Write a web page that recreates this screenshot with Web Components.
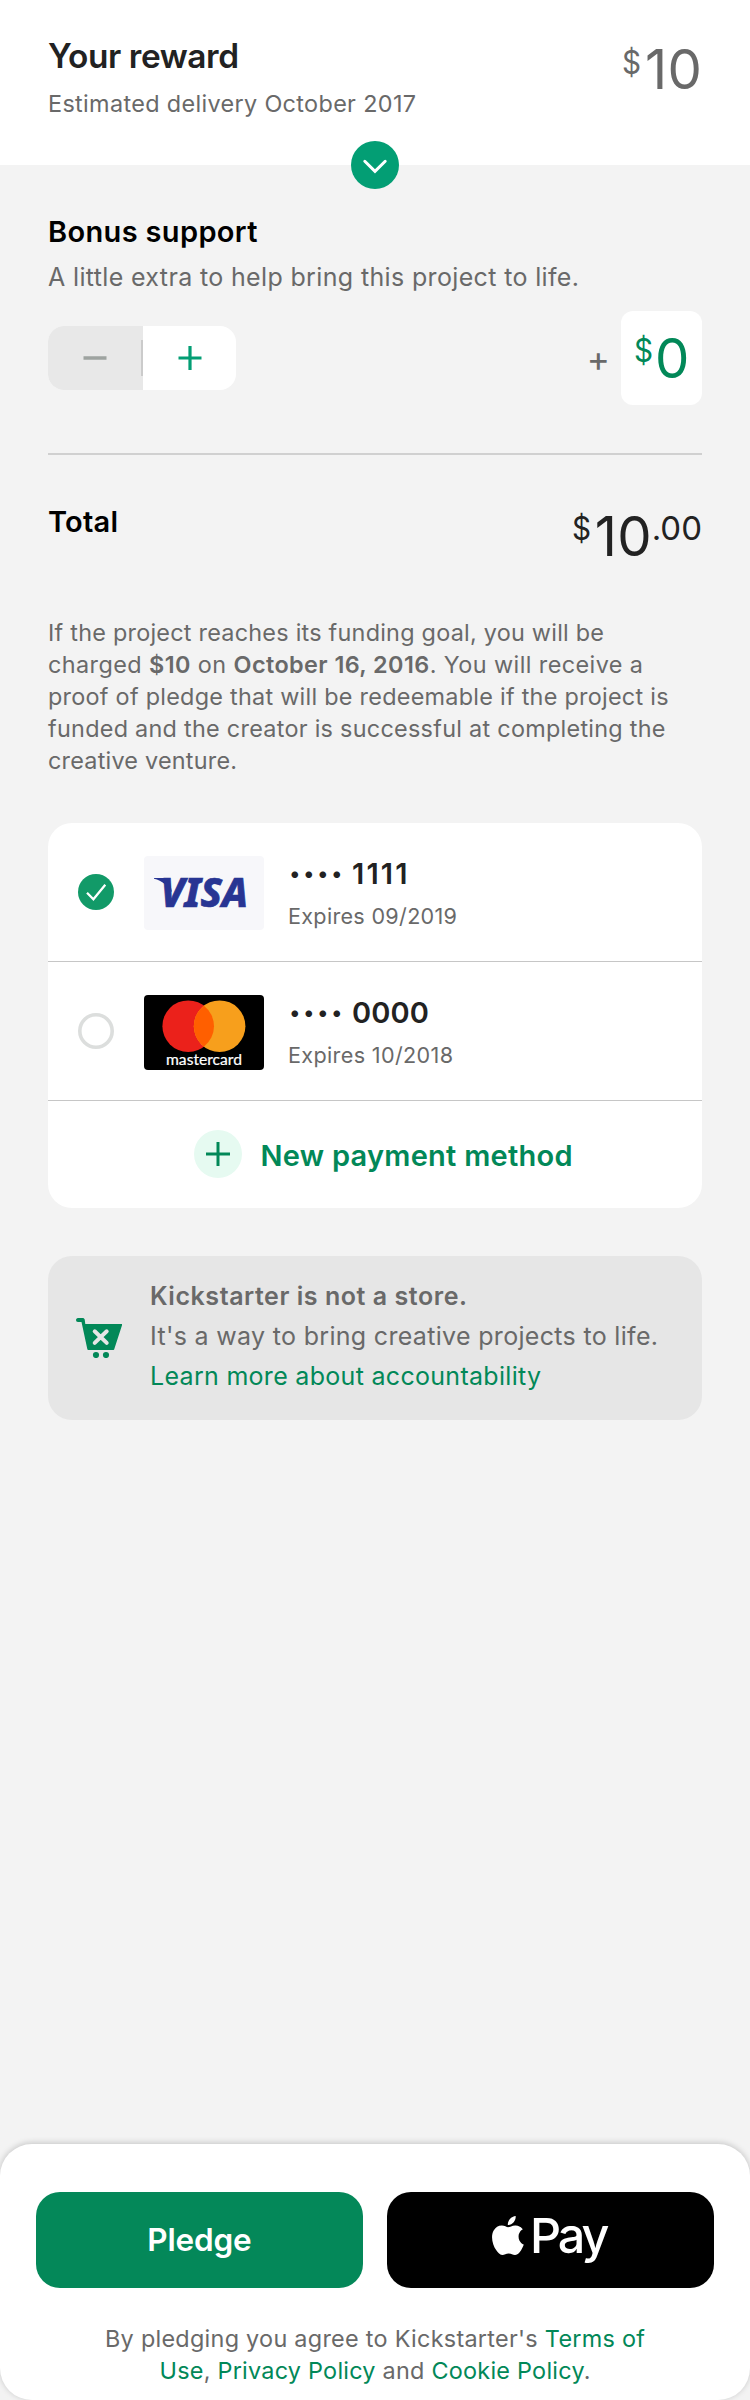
<!DOCTYPE html>
<html lang="en">
<head>
<meta charset="utf-8">
<title>Pledge</title>
<style>
html,body{margin:0;padding:0}
body{background:#f3f3f3;font-family:Inter,"Liberation Sans",sans-serif;color:#696969}
a{color:#028858;text-decoration:none}
</style>
</head>
<body>
<pledge-page></pledge-page>

<template id="t-page">
<style>
:host{display:flex;flex-direction:column;width:750px;height:2400px;background:#f3f3f3;overflow:hidden}
main{padding:46.5px 48px 0}
.support{display:flex;align-items:center;justify-content:space-between;height:94px;margin:18.4px 0 48px}
.extra{display:flex;align-items:center;gap:11px}
.plus{font-size:35px;line-height:40px;margin-top:1px}
.box{box-sizing:border-box;width:81px;height:94px;border-radius:12px;background:#fff;padding:14.7px 14px 0 13px;color:#028858}
hr{border:0;height:2px;background:#d0d0d0;margin:0}
.total{display:flex;justify-content:space-between;height:115.5px;margin-top:46.5px;color:#000}
.total pledge-money{margin-top:2.5px;color:#222}
.terms{margin-bottom:46px}
b{font-weight:600}
pledge-footer{margin-top:auto}
</style>
<reward-header></reward-header>
<main>
  <fit-line style="--fs:29px;--lh:40px;--fw:600;color:#000" w="209.5">Bonus support</fit-line>
  <fit-line style="--fs:25px;--lh:32px;margin-top:9px" w="531">A little extra to help bring this project to life.</fit-line>
  <div class="support">
    <pledge-stepper></pledge-stepper>
    <div class="extra"><span class="plus">+</span><div class="box"><pledge-money>0</pledge-money></div></div>
  </div>
  <hr>
  <div class="total">
    <fit-line style="--fs:29px;--lh:41px;--fw:600" w="70">Total</fit-line>
    <pledge-money wide>10<span slot="cents">.00</span></pledge-money>
  </div>
  <div class="terms">
    <fit-line w="556">If the project reaches its funding goal, you will be</fit-line>
    <fit-line w="595">charged <b>$10</b> on <b>October 16, 2016</b>. You will receive a</fit-line>
    <fit-line w="620.5">proof of pledge that will be redeemable if the project is</fit-line>
    <fit-line w="617.5">funded and the creator is successful at completing the</fit-line>
    <fit-line w="189">creative venture.</fit-line>
  </div>
  <payment-methods></payment-methods>
  <store-notice></store-notice>
</main>
<pledge-footer></pledge-footer>
</template>

<template id="t-line">
<style>
:host{display:block;font-size:var(--fs,23.4px);line-height:var(--lh,32px);height:var(--lh,32px);font-weight:var(--fw,400);white-space:nowrap}
span{display:inline-block}
</style><span><slot></slot></span>
</template>

<template id="t-money">
<style>
:host{display:flex;align-items:flex-start;height:64px;white-space:nowrap}
.s{font-size:33px;line-height:40px;margin-top:4.6px}
.d{width:21px}
.d i{font-style:normal;display:inline-block;transform:scaleX(.9);transform-origin:0 0}
:host([wide]) .d{width:23px}
.b{font-size:54.5px;line-height:64px;letter-spacing:.5px;margin-right:-.5px}
</style>
<span class="s d"><i>$</i></span><span class="b"><slot></slot></span><span class="s"><slot name="cents"></slot></span>
</template>

<template id="t-header">
<style>
:host{display:flex;justify-content:space-between;position:relative;box-sizing:border-box;height:165px;flex:none;padding:36px 48px 0;background:#fff}
pledge-money{margin-top:1px}
svg{position:absolute;left:351px;top:141px}
</style>
<div>
<fit-line style="--fs:33.4px;--lh:40px;--fw:600;color:#222" w="191">Your reward</fit-line>
<fit-line style="margin-top:11.5px" w="368">Estimated delivery October 2017</fit-line>
</div>
<pledge-money wide>10</pledge-money>
<svg width="48" height="48" viewBox="0 0 48 48"><circle cx="24" cy="24" r="24" fill="#039e74"/><path d="M13.8 20.3 24 30.4 34.2 20.3" fill="none" stroke="#fff" stroke-width="3" stroke-linecap="round"/></svg>
</template>

<template id="t-stepper">
<style>
:host{display:flex;width:188px;height:64px;border-radius:16px;overflow:hidden;background:#fff}
div{display:flex;align-items:center;justify-content:center;position:relative}
.m{box-sizing:border-box;width:95px;padding-right:1px;background:#e8e8e8}
.m::after{content:"";position:absolute;right:0;top:14px;width:2px;height:36px;background:#cbcbcb}
.p{flex:1}
</style>
<div class="m"><svg width="24" height="24"><path d="M.5 12h23" stroke="#9ea3a0" stroke-width="3.4"/></svg></div>
<div class="p"><svg width="24" height="24"><path d="M.5 12h23M12 0v24" stroke="#039e74" stroke-width="3.2"/></svg></div>
</template>

<template id="t-methods">
<style>
:host{display:block;border-radius:24px;background:#fff;height:385px;overflow:hidden}
.new{display:flex;align-items:center;height:107px;padding-left:146px;gap:18.5px;color:#028858}
.new fit-line{margin-top:4px}
</style>
<payment-row checked>
  <svg slot="brand" width="120" height="74" viewBox="0 0 120 74"><rect width="120" height="74" rx="4" fill="#f7f7fa"/><path d="M10 22h12c2 0 3 .8 3.500 2.500l2.500 12C24.500 30 18 24.500 10 22.700z" fill="#283593"/><text x="16.500" y="51.300" font-family="Noto Sans" font-size="40.500" font-weight="800" font-style="italic" fill="#283593" stroke="#283593" stroke-width=".7" textLength="87.500" lengthAdjust="spacingAndGlyphs">VISA</text></svg>
  <fit-line slot="number" w="55.500">1111</fit-line>
  <fit-line slot="expiry" w="169">Expires 09/2019</fit-line>
</payment-row>
<payment-row>
  <svg slot="brand" width="120" height="75" viewBox="0 0 120 75"><rect width="120" height="75" rx="4"/><circle cx="44.200" cy="31.200" r="25.800" fill="#eb211b"/><circle cx="75.600" cy="31.200" r="25.800" fill="#f79f1c"/><path d="M59.900 10.730a25.800 25.800 0 0 1 0 40.940a25.800 25.800 0 0 1 0-40.940z" fill="#ff5f00"/><text x="22" y="69.700" font-family="Lato" font-size="14.500" fill="#fff" stroke="#fff" stroke-width=".2" textLength="76" lengthAdjust="spacingAndGlyphs">mastercard</text></svg>
  <fit-line slot="number" w="77">0000</fit-line>
  <fit-line slot="expiry" w="165">Expires 10/2018</fit-line>
</payment-row>
<div class="new">
  <svg width="48" height="48"><circle cx="24" cy="24" r="24" fill="#e6faf1"/><path d="M12 24h24M24 12v24" stroke="#028858" stroke-width="3"/></svg>
  <fit-line style="--fs:29px;--lh:40px;--fw:600" w="312">New payment method</fit-line>
</div>
</template>

<template id="t-row">
<style>
:host{display:flex;box-sizing:border-box;height:139px;border-bottom:1px solid #c6c6c6;padding-left:30px}
.radio{margin:51px 30px 0 0;flex:none}
:host(:not([checked])) .on,:host([checked]) .off{display:none}
.brand{width:120px;margin:33px 24px 0 0}
.info{padding-top:31.3px}
.num{display:flex;color:#222;--fs:29px;--lh:40px;--fw:600;height:40px;margin-left:2px}
.exp{--fs:21.6px;--lh:28px;margin-top:8px}
.dots{width:62px}
.dots fit-line{--fs:21px;margin-left:-.5px}
</style>
<svg class="radio" width="36" height="36"><g class="on"><circle cx="18" cy="18" r="18" fill="#129a68"/><path d="m9 18.800 6.400 6.400L27.300 10.800" fill="none" stroke="#fff" stroke-width="2.300"/></g><circle class="off" cx="18" cy="18" r="16.200" fill="none" stroke="#dcdedd" stroke-width="3.600"/></svg>
<div class="brand"><slot name="brand"></slot></div>
<div class="info">
<div class="num"><div class="dots"><fit-line w="52.500">••••</fit-line></div><slot name="number"></slot></div>
<div class="exp"><slot name="expiry"></slot></div>
</div>
</template>

<template id="t-notice">
<style>
:host{display:flex;box-sizing:border-box;margin-top:48px;height:164px;border-radius:24px;background:#e6e6e6;padding:20px 0 0 28px;--fs:25px;--lh:40px}
svg{margin:42px 28px 0 0;flex:none}
a{color:#028858}
</style>
<svg width="46" height="40" viewBox="0 0 46 40"><path d="M2 0h4.500c1.200 0 2 .5 2.200 1.600L9.300 6H45.600c.5 0 .6.400.5.900L38.300 31c-.2.700-.5 1-1.200 1H12.600c-.8 0-1.100-.4-1.300-1.100L5.500 4.100H2C-.6 4.100-.6 0 2 0z" fill="#028858"/><path d="M18.700 13.300l12 11.600M30.700 13.300l-12 11.600" stroke="#e6e6e6" stroke-width="4" stroke-linecap="round"/><circle cx="20" cy="37" r="3.100" fill="#028858"/><circle cx="30" cy="37" r="3.100" fill="#028858"/></svg>
<div>
<fit-line style="--fw:600" w="317">Kickstarter is not a store.</fit-line>
<fit-line w="508">It's a way to bring creative projects to life.</fit-line>
<fit-line w="391"><a>Learn more about accountability</a></fit-line>
</div>
</template>

<template id="t-footer">
<style>
:host{display:block;box-sizing:border-box;flex:none;height:256px;padding:48px 36px 0;background:#fff;border-radius:32px;box-shadow:0 -1px 6px rgba(0,0,0,.2)}
.b{display:flex;gap:24px;margin-bottom:35px}
.b>div{flex:1;display:flex;justify-content:center;height:96px;border-radius:24px;color:#fff}
.g{background:#048859}
.g fit-line{margin-top:28px}
.k{background:#000}
.k svg{margin:23.700px 6.500px 0 0}
.k fit-line{margin-top:14px;--fs:48.500px;--lh:60px;--fw:450}
.t{display:flex;flex-direction:column;align-items:center}
a{color:#028858}
</style>
<div class="b">
<div class="g"><fit-line style="--fs:31.500px;--lh:40px;--fw:600" w="104.500">Pledge</fit-line></div>
<div class="k"><svg width="32" height="39" viewBox="2.200 0 19.700 24"><path fill="#fff" d="M12.152 6.896c-.948 0-2.415-1.078-3.960-1.040-2.040.027-3.910 1.183-4.961 3.014-2.117 3.675-.546 9.103 1.519 12.090 1.013 1.454 2.208 3.090 3.792 3.039 1.520-.065 2.090-.987 3.935-.987 1.831 0 2.350.987 3.960.948 1.637-.026 2.676-1.480 3.676-2.948 1.156-1.688 1.636-3.325 1.662-3.415-.039-.013-3.182-1.221-3.220-4.857-.026-3.040 2.480-4.494 2.597-4.559-1.429-2.090-3.623-2.324-4.390-2.376-2-.156-3.675 1.090-4.610 1.090zM15.530 3.830c.843-1.012 1.400-2.427 1.245-3.830-1.207.052-2.662.805-3.532 1.818-.780.896-1.454 2.338-1.273 3.714 1.338.104 2.715-.688 3.559-1.701"/></svg><fit-line w="79.500">Pay</fit-line></div>
</div>
<div class="t">
<fit-line w="540">By pledging you agree to Kickstarter's <a>Terms of</a></fit-line>
<fit-line w="431"><a>Use</a>, <a>Privacy Policy</a> and <a>Cookie Policy</a>.</fit-line>
</div>
</template>

<script>
class Base extends HTMLElement {
  constructor() {
    super();
    this.attachShadow({mode: 'open'}).appendChild(document.getElementById(this.constructor.tpl).content.cloneNode(true));
  }
}
const define = (name, tpl) => customElements.define(name, class extends Base { static tpl = tpl; });
define('pledge-page', 't-page');
define('reward-header', 't-header');
define('pledge-stepper', 't-stepper');
define('pledge-money', 't-money');
define('payment-methods', 't-methods');
define('payment-row', 't-row');
define('store-notice', 't-notice');
define('pledge-footer', 't-footer');

// A single line of text whose tracking is set so that it spans "w" pixels.
class FitLine extends Base {
  static tpl = 't-line';
  connectedCallback() {
    const w = parseFloat(this.getAttribute('w'));
    const n = this.textContent.length;
    const span = this.shadowRoot.querySelector('span');
    const natural = span.getBoundingClientRect().width;
    if (!w || n < 2 || !natural) return;
    const ls = (w - natural) / (n - 1);
    span.style.letterSpacing = ls + 'px';
    span.style.marginRight = -ls + 'px';
  }
}
customElements.define('fit-line', FitLine);
</script>
</body>
</html>
